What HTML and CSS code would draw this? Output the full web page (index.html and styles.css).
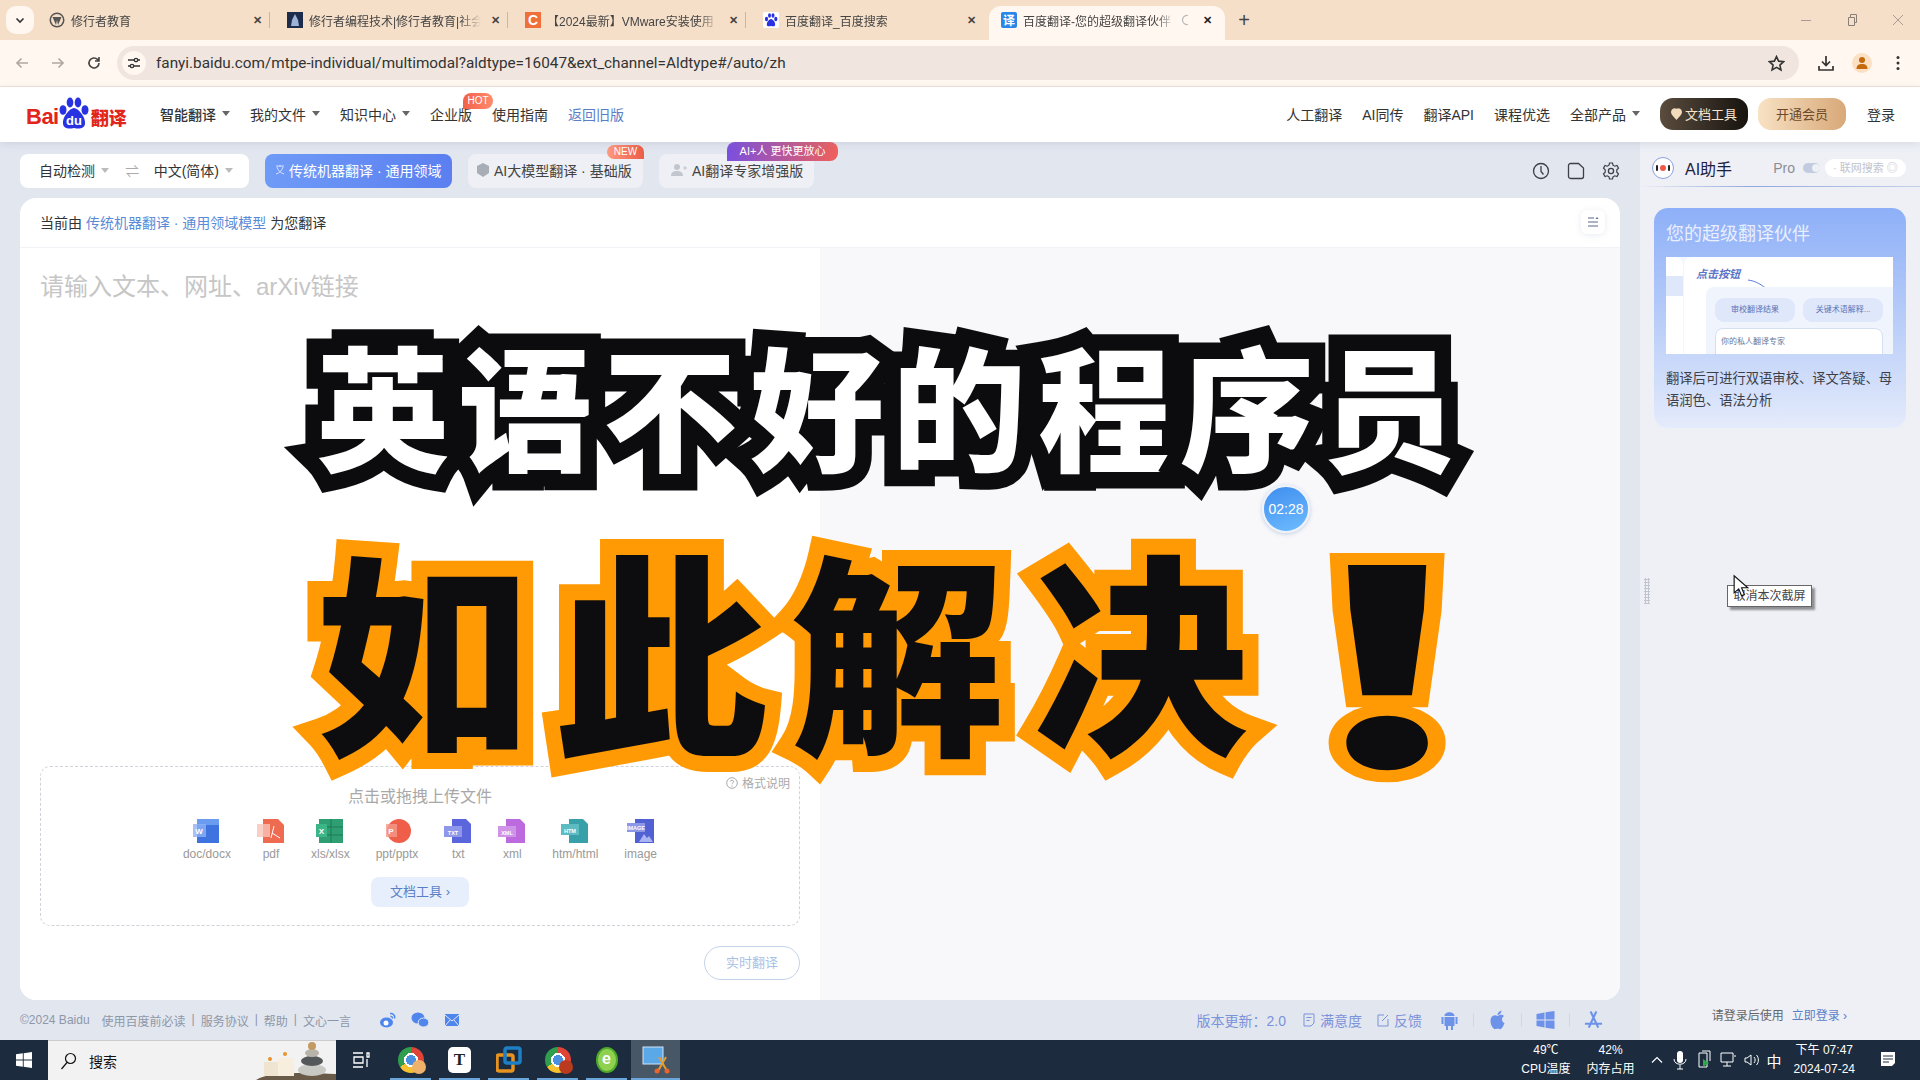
FILE: index.html
```html
<!DOCTYPE html>
<html lang="zh-CN">
<head>
<meta charset="utf-8">
<title>百度翻译</title>
<link rel="stylesheet" href="styles.css">
</head>
<body>
<div class="tabstrip">
  <div class="tablist-btn"><svg width="10" height="10" viewBox="0 0 10 10"><path d="M1.5 3.5 5 7l3.500-3.500" fill="none" stroke="#333" stroke-width="1.600"/></svg></div>
  <div class="tab"><svg class="fav" viewBox="0 0 16 16"><circle cx="8" cy="8" r="7.500" fill="#555"/><circle cx="8" cy="8" r="6" fill="#f5dfc8"/><path d="M3.500 5h9L9 13 8 8l-1 5z" fill="#555"/></svg><span class="tab-title">修行者教育</span><span class="tab-x">✕</span></div>
  <div class="tab"><svg class="fav" viewBox="0 0 16 16"><rect width="16" height="16" fill="#1d2c4a"/><path d="M8 2l3 6 1 6H4l1-6z" fill="#9db4d8"/></svg><span class="tab-title">修行者编程技术|修行者教育|社会</span><span class="tab-x">✕</span></div>
  <div class="tab"><svg class="fav" viewBox="0 0 16 16"><rect width="16" height="16" fill="#f0703a"/><text x="8" y="13" text-anchor="middle" class="fav-c">C</text></svg><span class="tab-title">【2024最新】VMware安装使用</span><span class="tab-x">✕</span></div>
  <div class="tab"><svg class="fav" viewBox="0 0 16 16"><rect width="16" height="16" fill="#fff" rx="2"/><g fill="#2932e1"><ellipse cx="3.500" cy="7" rx="1.600" ry="2.200"/><ellipse cx="6.500" cy="3.500" rx="1.500" ry="2.200"/><ellipse cx="10" cy="3.500" rx="1.500" ry="2.200"/><ellipse cx="12.800" cy="7" rx="1.600" ry="2.200"/><path d="M8 7c2 0 5 4 4 6.500C11 15 9 14 8 14s-3 1-4-.5C3 11 6 7 8 7z"/></g></svg><span class="tab-title">百度翻译_百度搜索</span><span class="tab-x">✕</span></div>
  <div class="tab tab-active"><svg class="fav" viewBox="0 0 16 16"><rect width="16" height="16" rx="2" fill="#2a86e8"/><text x="8" y="13" text-anchor="middle" class="fav-y">译</text></svg><span class="tab-title">百度翻译-您的超级翻译伙伴</span><svg class="spin" viewBox="0 0 12 12"><path d="M7 1.500A4.600 4.600 0 1 0 7 10.500" fill="none" stroke="#bbb" stroke-width="1.200"/></svg><span class="tab-x">✕</span></div>
  <div class="newtab">+</div>
  <div class="winbtns">
    <svg viewBox="0 0 12 12"><path d="M1 6.500h10" stroke="#a99" fill="none"/></svg>
    <svg viewBox="0 0 12 12"><path d="M2.500 3.500h6v8h-6zM4.500 3.500v-3h6v8h-2" stroke="#8a8078" fill="none"/></svg>
    <svg viewBox="0 0 12 12"><path d="M1 1l10 10M11 1 1 11" stroke="#a99" fill="none"/></svg>
  </div>
</div>
<div class="toolbar">
  <svg class="tb-ico" viewBox="0 0 16 16"><path d="M14 8H3M7.500 3.500 3 8l4.500 4.500" fill="none" stroke="#b0a8a2" stroke-width="1.700"/></svg>
  <svg class="tb-ico" viewBox="0 0 16 16"><path d="M2 8h11M8.500 3.500 13 8l-4.500 4.500" fill="none" stroke="#b0a8a2" stroke-width="1.700"/></svg>
  <svg class="tb-ico" viewBox="0 0 16 16"><path d="M13 8a5 5 0 1 1-1.500-3.600L13 6M13 2v4H9" fill="none" stroke="#444" stroke-width="1.600"/></svg>
  <div class="omnibox">
    <span class="site-ico"><svg width="14" height="14" viewBox="0 0 14 14"><path d="M1 4h6M11 4h2M1 10h2M7 10h6" stroke="#333" stroke-width="1.500"/><circle cx="9" cy="4" r="1.700" fill="none" stroke="#333" stroke-width="1.300"/><circle cx="5" cy="10" r="1.700" fill="none" stroke="#333" stroke-width="1.300"/></svg></span>
    <span class="url">fanyi.baidu.com/mtpe-individual/multimodal?aldtype=16047&amp;ext_channel=Aldtype#/auto/zh</span>
    <svg class="star" viewBox="0 0 16 16"><path d="M8 1.500l2 4.300 4.700.5-3.500 3.200 1 4.600L8 11.700l-4.200 2.400 1-4.600L1.300 6.300 6 5.800z" fill="none" stroke="#333" stroke-width="1.500"/></svg>
  </div>
  <div class="tb-right">
    <svg class="tb-ico2" viewBox="0 0 18 18"><path d="M9 2v9M5 7.500 9 11.500l4-4M2 12v4h14v-4" fill="none" stroke="#333" stroke-width="1.700"/></svg>
    <span class="avatar"><svg width="14" height="14" viewBox="0 0 14 14"><circle cx="7" cy="4" r="3" fill="#c46a0c"/><path d="M1.500 13c0-4 2.500-5 5.500-5s5.500 1 5.500 5z" fill="#c46a0c"/></svg></span>
    <svg class="tb-ico2" viewBox="0 0 18 18"><g fill="#333"><circle cx="9" cy="3.500" r="1.500"/><circle cx="9" cy="9" r="1.500"/><circle cx="9" cy="14.500" r="1.500"/></g></svg>
  </div>
</div>

<header class="nav">
  <div class="logo">
    <span class="logo-bai">Bai</span>
    <span class="logo-paw"><svg width="33" height="33" viewBox="0 0 33 33"><g fill="#2932e1"><ellipse cx="6" cy="13" rx="3.500" ry="4.800"/><ellipse cx="13" cy="5.500" rx="3.300" ry="5"/><ellipse cx="21" cy="5.500" rx="3.300" ry="5"/><ellipse cx="28" cy="13" rx="3.500" ry="4.800"/><path d="M17 11c4 0 12 9 11 16-1 5-6 5-11 4-5 1-10 1-11-4-1-7 7-16 11-16z"/></g><text x="17" y="28" text-anchor="middle" class="logo-du">du</text></svg></span>
    <span class="logo-fy">翻译</span>
  </div>
  <nav class="nav-left">
    <span class="nav-item strong">智能翻译<i class="caret"></i></span>
    <span class="nav-item">我的文件<i class="caret"></i></span>
    <span class="nav-item">知识中心<i class="caret"></i></span>
    <span class="nav-item has-badge">企业版<b class="badge badge-hot">HOT</b></span>
    <span class="nav-item">使用指南</span>
    <span class="nav-item link">返回旧版</span>
  </nav>
  <nav class="nav-right">
    <span class="nav-item">人工翻译</span>
    <span class="nav-item">AI同传</span>
    <span class="nav-item">翻译API</span>
    <span class="nav-item">课程优选</span>
    <span class="nav-item">全部产品<i class="caret"></i></span>
    <span class="btn-dark"><svg width="11" height="12" viewBox="0 0 13 14"><path d="M6.500 14C4 11 0 7.500 0 4.500A4.500 4.500 0 0 1 6.500.800 4.500 4.500 0 0 1 13 4.500C13 7.500 9 11 6.500 14z" fill="#f3dcbc"/></svg>文档工具</span>
    <span class="btn-gold">开通会员</span>
    <span class="nav-item login">登录</span>
  </nav>
</header>

<div class="main">
  <section class="workspace">
    <div class="modes">
      <div class="chip chip-lang"><span>自动检测<i class="caret light"></i></span><span class="swap">⇌</span><span>中文(简体)<i class="caret light"></i></span></div>
      <div class="chip chip-on"><svg width="12" height="12" viewBox="0 0 12 12"><path d="M2 2h8M6 1v2M3 3c1 4 4 6 7 7M9 3c-1 3-3 6-7 7" stroke="#d5e2ff" fill="none"/></svg>传统机器翻译 · 通用领域</div>
      <div class="chip chip-off chip-llm"><svg width="12" height="14" viewBox="0 0 12 14"><path d="M6 0l6 3v7l-6 4-6-4V3z" fill="#a9adb6"/></svg>AI大模型翻译 · 基础版<b class="badge badge-new">NEW</b></div>
      <div class="chip chip-off chip-exp"><svg width="16" height="14" viewBox="0 0 16 14"><circle cx="6" cy="4" r="3" fill="#c2c6ce"/><path d="M0 13c0-4 3-5 6-5s6 1 6 5z" fill="#c2c6ce"/><path d="M12 5h4M14 3v4" stroke="#c2c6ce"/></svg>AI翻译专家增强版<b class="badge badge-ai">AI+人 更快更放心</b></div>
      <div class="mode-tools">
        <svg viewBox="0 0 18 18"><circle cx="9" cy="9" r="7.500" fill="none" stroke="#3c3f47" stroke-width="1.300"/><path d="M9 4v5.500l2.500 3" fill="none" stroke="#3c3f47" stroke-width="1.300"/></svg>
        <svg viewBox="0 0 18 18"><path d="M1.500 3.500a2 2 0 0 1 2-2h8l5 4.500v8.500a2 2 0 0 1-2 2h-11a2 2 0 0 1-2-2z" fill="none" stroke="#3c3f47" stroke-width="1.300"/></svg>
        <svg viewBox="0 0 18 18"><circle cx="9" cy="9" r="2.600" fill="none" stroke="#3c3f47" stroke-width="1.300"/><path d="M7.500 1h3l.5 2.200 1.800 1 2.200-.7 1.500 2.600-1.700 1.600v2.600l1.700 1.600-1.500 2.600-2.200-.7-1.800 1-.5 2.200h-3L7 14.800l-1.800-1-2.200.7-1.500-2.600 1.700-1.600V7.700L1.500 6.100 3 3.500l2.200.7 1.800-1z" fill="none" stroke="#3c3f47" stroke-width="1.200"/></svg>
      </div>
    </div>
    <div class="card">
      <div class="card-head">
        <p class="current">当前由 <a>传统机器翻译 · 通用领域模型</a> 为您翻译</p>
        <span class="fold"><svg width="12" height="12" viewBox="0 0 12 12"><path d="M1 2h6M1 6h10M1 10h10" stroke="#5b6b8a" stroke-width="1.200"/><path d="M8.500 3 10 1l1.500 2z" fill="#5b6b8a"/></svg></span>
      </div>
      <div class="panes">
        <div class="pane-src">
          <p class="placeholder">请输入文本、网址、arXiv链接</p>
          <div class="upload">
            <span class="format"><svg width="12" height="12" viewBox="0 0 12 12"><circle cx="6" cy="6" r="5.300" fill="none" stroke="#aaa"/><path d="M4.300 4.600C4.300 2.800 7.700 2.800 7.700 4.600 7.700 6 6 5.800 6 7.300M6 8.500v1.200" fill="none" stroke="#aaa"/></svg>格式说明</span>
            <p class="upload-title">点击或拖拽上传文件</p>
            <div class="files">
              <div class="file"><svg viewBox="0 0 28 24"><path d="M4 0h22v24H4z" fill="#3f73e0"/><path d="M4 0h22v6H4z" fill="#6a9cf0"/><rect y="5" width="13" height="13" fill="#8fb1f3" opacity=".8"/><text x="6" y="15" text-anchor="middle" class="ft">W</text></svg><span>doc/docx</span></div>
              <div class="file"><svg viewBox="0 0 28 24"><path d="M6 0h15l6 6v18H6z" fill="#ee6a50"/><rect y="5" width="13" height="13" fill="#f9c3b6" opacity=".8"/><path d="M17 7l-3 12M15 14l8 5" stroke="#fff" fill="none"/></svg><span>pdf</span></div>
              <div class="file"><svg viewBox="0 0 28 24"><path d="M3 0h24v24H3z" fill="#2f9e72"/><path d="M15 0v24M3 8h24M3 16h24" stroke="#1f7a55"/><rect y="5" width="11" height="13" fill="#3cb587"/><text x="5.500" y="15" text-anchor="middle" class="ft">X</text></svg><span>xls/xlsx</span></div>
              <div class="file"><svg viewBox="0 0 28 24"><ellipse cx="16" cy="12" rx="12" ry="12" fill="#ee5e48"/><rect x="3" y="5" width="11" height="13" fill="#f59a8a" opacity=".8"/><text x="8" y="15" text-anchor="middle" class="ft">P</text></svg><span>ppt/pptx</span></div>
              <div class="file"><svg viewBox="0 0 28 24"><path d="M8 0h14l5 5v19H8z" fill="#5c66dc"/><rect y="7" width="18" height="11" fill="#8f97ea"/><text x="9" y="15.500" text-anchor="middle" class="fts">TXT</text></svg><span>txt</span></div>
              <div class="file"><svg viewBox="0 0 28 24"><path d="M8 0h14l5 5v19H8z" fill="#bd6ade"/><rect y="7" width="18" height="11" fill="#cf94e8"/><text x="9" y="15.500" text-anchor="middle" class="fts">XML</text></svg><span>xml</span></div>
              <div class="file"><svg viewBox="0 0 28 24"><path d="M8 0h14l5 5v19H8z" fill="#37a0a8"/><rect y="5" width="18" height="11" fill="#5dbcc2"/><text x="9" y="13.500" text-anchor="middle" class="fts">HTM</text></svg><span>htm/html</span></div>
              <div class="file"><svg viewBox="0 0 28 24"><path d="M8 0h19v24H8z" fill="#5161d4"/><rect y="4" width="18" height="9" fill="#8c97e6"/><text x="9" y="10.500" text-anchor="middle" class="fts">IMAGE</text><path d="M12 23l5-8 3 4 2-2 4 6z" fill="#a9b4f0"/></svg><span>image</span></div>
            </div>
            <span class="doc-tools">文档工具 ›</span>
          </div>
          <div class="rt-row"><span class="rt-btn">实时翻译</span></div>
        </div>
        <div class="pane-dst"></div>
      </div>
    </div>
    <footer class="foot">
      <div class="foot-left">
        <span>©2024 Baidu</span>
        <span class="foot-links"><span>使用百度前必读</span><span>|</span><span>服务协议</span><span>|</span><span>帮助</span><span>|</span><span>文心一言</span></span>
        <span class="foot-social">
          <svg viewBox="0 0 18 18"><ellipse cx="7.500" cy="11.500" rx="6.500" ry="5" fill="#4f86ee"/><circle cx="7" cy="12" r="2.500" fill="#fff"/><path d="M11 2.500c3-.5 5.500 2 4.500 5M11.500 5.500c1.500-.3 2.300.8 2 2" fill="none" stroke="#4f86ee" stroke-width="1.400"/></svg>
          <svg viewBox="0 0 18 18"><ellipse cx="7" cy="7" rx="6.500" ry="5.500" fill="#4f86ee"/><ellipse cx="12.500" cy="11.500" rx="5.300" ry="4.500" fill="#4f86ee" stroke="#e2e6ef"/></svg>
          <svg viewBox="0 0 18 18"><rect x="2" y="3" width="14" height="12" fill="#4f86ee"/><path d="M2 4l7 6 7-6M2 15l5-6M16 15l-5-6" fill="none" stroke="#e2e6ef"/></svg>
        </span>
      </div>
      <div class="foot-right">
        <span class="ver">版本更新：2.0</span>
        <span class="foot-act"><svg viewBox="0 0 12 14"><path d="M1 1h10v9l-3 3H1zM3.500 4.500h5M3.500 7.500h3" fill="none" stroke="#7b93da"/></svg>满意度</span>
        <span class="foot-act"><svg viewBox="0 0 12 14"><path d="M11 6v7H1V2h6M5 8l6-6" fill="none" stroke="#7b93da"/></svg>反馈</span>
        <span class="platforms">
          <svg viewBox="0 0 18 20"><path d="M4 7h10v9H4zM1 7h2v7H1zM15 7h2v7h-2zM5.500 16h2v4h-2zM10.500 16h2v4h-2zM4 6c0-5 10-5 10 0z" fill="#6d92ea"/></svg>
          <i class="sep"></i>
          <svg viewBox="0 0 18 20"><path d="M9 6C6 4 2 6 2 11c0 4 3 9 5 8 1-.5 2.500-.5 4 0 2 1 4-3 5-6-3-1-3.500-5-.5-7-2-2-4-1-6.500 0zM9 5c0-2 1.500-4 4-4.500C13 3 11 5 9 5z" fill="#6d92ea"/></svg>
          <i class="sep"></i>
          <svg viewBox="0 0 18 20"><path d="M0 4l8-1.500V9.500H0zM9 2.300 18 1v8.500H9zM0 10.500h8v7L0 16zM9 10.500h9V19l-9-1.300z" fill="#6d92ea"/></svg>
          <i class="sep"></i>
          <svg viewBox="0 0 20 20"><path d="M7 1l8 17M13 1 5 18M1 14h18" fill="none" stroke="#6d92ea" stroke-width="2.200"/></svg>
        </span>
      </div>
    </footer>
  </section>

  <aside class="assist">
    <div class="assist-head">
      <span class="bot"><i></i><i class="red"></i><i></i></span>
      <span class="assist-name">AI助手</span>
      <span class="pro">Pro</span>
      <span class="toggle"></span>
      <span class="web">· 联网搜索 ◎</span>
    </div>
    <div class="promo">
      <h3 class="promo-title">您的超级翻译伙伴</h3>
      <div class="mock">
        <div class="mock-side"></div>
        <div class="mock-main">
          <em class="mock-click">点击按钮</em>
          <svg class="mock-arrow" width="26" height="16" viewBox="0 0 26 16"><path d="M0 1c8 1 14 5 20 10" fill="none" stroke="#5a7ad8"/><path d="M24 15l-8-2 5-5z" fill="#5a7ad8"/></svg>
          <div class="mock-panel">
            <div class="mock-btns"><span>审校翻译结果</span><span>关键术语解释...</span></div>
            <div class="mock-input">你的私人翻译专家</div>
          </div>
        </div>
      </div>
      <p class="promo-desc">翻译后可进行双语审校、译文答疑、母语润色、语法分析</p>
    </div>
    <div class="assist-foot">请登录后使用<a>立即登录 ›</a></div>
  </aside>
</div>

<div class="taskbar">
  <div class="start"><svg width="16" height="16" viewBox="0 0 16 16"><path d="M0 2.300 6.800 1.300v6.200H0zM7.700 1.200 16 0v7.500H7.700zM0 8.500h6.800v6.200L0 13.700zM7.700 8.500H16V16l-8.300-1.200z" fill="#fff"/></svg></div>
  <div class="search">
    <svg width="18" height="18" viewBox="0 0 18 18"><circle cx="10.500" cy="6.500" r="5" fill="none" stroke="#111" stroke-width="1.200"/><path d="M7 10.500 1.500 17" stroke="#111" stroke-width="1.200"/></svg>
    <span>搜索</span>
    <svg class="stones" width="80" height="40" viewBox="0 0 80 40"><path d="M0 40c10-8 50-8 80-6v6z" fill="#6a5a48"/><rect x="8" y="22" width="14" height="14" fill="#efe4cf"/><rect x="22" y="18" width="16" height="18" fill="#f7eedd"/><circle cx="14" cy="19" r="2" fill="#e8942a"/><circle cx="29" cy="14" r="2" fill="#e8942a"/><ellipse cx="56" cy="30" rx="14" ry="6" fill="#c9c9c4"/><ellipse cx="56" cy="21" rx="11" ry="5" fill="#55585a"/><ellipse cx="56" cy="13" rx="7" ry="4" fill="#b8b4aa"/><circle cx="56" cy="6" r="4" fill="#c29a62"/></svg>
  </div>
  <div class="taskview"><svg width="18" height="18" viewBox="0 0 18 18"><path d="M1 2h10M1 16h10M2 6h9v6H2zM15 2h2v4h-2zM15 8v8" fill="none" stroke="#fff" stroke-width="1.300"/></svg></div>
  <div class="apps">
    <span class="app"><i class="chrome"></i><i class="app-badge gold"></i></span>
    <span class="app"><b class="app-t">T</b></span>
    <span class="app"><svg width="26" height="28" viewBox="0 0 26 28"><rect x="1" y="9" width="16" height="16" rx="2" fill="none" stroke="#e8921f" stroke-width="3.500"/><rect x="9" y="2" width="15" height="15" rx="2" fill="none" stroke="#1f7fc4" stroke-width="3.500"/></svg></span>
    <span class="app"><i class="chrome"></i><i class="app-badge red"></i></span>
    <span class="app"><i class="app-e">e</i></span>
    <span class="app app-on"><svg width="28" height="30" viewBox="0 0 28 30"><rect x="1" y="2" width="20" height="17" fill="#5aa8e8" stroke="#cfe4f6"/><path d="M16 26l8-14M25 26l-8-14" stroke="#e89a2a" stroke-width="2"/><circle cx="15" cy="26" r="2.500" fill="#e8642a"/><circle cx="25" cy="26" r="2.500" fill="#e8642a"/></svg></span>
  </div>
  <div class="tray">
    <div class="stat"><span>49℃</span><span>CPU温度</span></div>
    <div class="stat"><span>42%</span><span>内存占用</span></div>
    <svg class="tray-up" viewBox="0 0 14 14"><path d="M2 9.500 7 4.500l5 5" fill="none" stroke="#fff" stroke-width="1.200"/></svg>
    <svg class="tray-ico" viewBox="0 0 16 20"><rect x="5" y="1" width="6" height="12" rx="3" fill="#fff"/><path d="M2 9c0 7 12 7 12 0M8 15v4M5 19h6" fill="none" stroke="#fff"/></svg>
    <svg class="tray-ico" viewBox="0 0 16 20"><path d="M3 3h8v14H3zM6 1h8v10" fill="none" stroke="#fff"/><path d="M7 9l6 4-6 4z" fill="#2fa84a"/></svg>
    <svg class="tray-ico" viewBox="0 0 16 20"><path d="M1 3h12v9H1zM7 12v4M3 16h8M14 6h2" fill="none" stroke="#fff"/></svg>
    <svg class="tray-ico" viewBox="0 0 16 20"><path d="M1 8v4h2l4 3V5L3 8zM10 7c1.500 1.500 1.500 4.500 0 6M12.500 5c2.500 2.500 2.500 7.500 0 10" fill="none" stroke="#fff"/></svg>
    <span class="ime">中</span>
    <div class="clock"><span>下午 07:47</span><span>2024-07-24</span></div>
    <svg class="notice" viewBox="0 0 16 18"><path d="M1 1h14v11l-3 3H1z" fill="#fff"/><path d="M3 5h10M3 8h10M3 11h6" stroke="#1c2c3e"/></svg>
  </div>
</div>

<svg class="headline" viewBox="0 0 1920 1080" width="1920" height="1080">
  <text class="hl-top" x="316 458 603 750 892 1038 1180 1322" y="461">英语不好的程序员</text>
  <text class="hl-bottom" x="316 554 791 1034" y="738">如此解决</text>
  <text class="hl-bottom hl-bang" transform="translate(1487 767) scale(1.48 1)" text-anchor="middle">！</text>
</svg>
<div class="timer">02:28</div>
<div class="grip"></div>
<div class="tip">取消本次截屏</div>
<svg class="cursor" width="16" height="24" viewBox="0 0 14 20"><path d="M1 1v15l4-3.500 2.500 6 2.500-1-2.500-6H13z" fill="#fff" stroke="#111"/></svg>
</body>
</html>
```
FILE: styles.css
```css
* { box-sizing: border-box; }
html, body { margin: 0; padding: 0; }
body {
  position: relative;
  width: 1920px;
  height: 1080px;
  overflow: hidden;
  display: flex;
  flex-direction: column;
  font-family: "Liberation Sans", "Noto Sans CJK SC", sans-serif;
  font-size: 14px;
  color: #333;
  background: #e2e6ef;
}
p, h3 { margin: 0; font-weight: 400; }
i, em { font-style: normal; }

/* browser chrome */
.tabstrip { height: 40px; flex: none; display: flex; align-items: flex-end; background: #f5dfc8; position: relative; }
.tablist-btn { position: absolute; left: 6px; top: 6px; width: 28px; height: 28px; border-radius: 10px; background: #fff7f0; display: flex; align-items: center; justify-content: center; }
.tablist-btn svg { display: block; }
.tab { width: 238px; height: 34px; display: flex; align-items: center; padding: 0 10px 6px 12px; gap: 6px; font-size: 12px; color: #444; position: relative; }
.tablist-btn + .tab { margin-left: 37px; }
.tab:not(.tab-active):not(:nth-child(5))::after { content: ""; position: absolute; right: 5px; top: 6px; height: 16px; width: 1px; background: #c9b7a5; }
.tab-active { background: #fff7f0; border-radius: 12px 12px 0 0; width: 236px; }
.fav { width: 16px; height: 16px; flex: none; }
.fav-c { font: 700 14px "Liberation Sans", sans-serif; fill: #fff; }
.fav-y { font: 700 12px "Noto Sans CJK SC", sans-serif; fill: #fff; }
.tab-title { flex: 1; white-space: nowrap; overflow: hidden; min-width: 0; -webkit-mask-image: linear-gradient(90deg, #000 88%, transparent); mask-image: linear-gradient(90deg, #000 88%, transparent); }
.tab-x { font-size: 11px; font-weight: 700; width: 16px; text-align: center; color: #444; }
.tab-active .tab-x { color: #222; }
.spin { width: 12px; height: 12px; flex: none; }
.newtab { width: 38px; height: 34px; font-size: 20px; line-height: 28px; text-align: center; color: #444; }
.winbtns { margin-left: auto; align-self: center; display: flex; gap: 34px; padding-right: 16px; }
.winbtns svg { width: 12px; height: 12px; display: block; }

.toolbar { height: 47px; flex: none; display: flex; align-items: center; background: #fff7f0; padding-left: 14px; border-bottom: 1px solid #f3e0d3; }
.tb-ico { width: 16px; height: 16px; margin-right: 20px; flex: none; }
.tb-ico:nth-child(3) { margin-right: 15px; }
.omnibox { width: 1682px; height: 34px; background: #f0e6df; border-radius: 17px; display: flex; align-items: center; padding: 0 14px 0 5px; }
.site-ico { width: 24px; height: 24px; background: #fff7f0; border-radius: 50%; display: flex; align-items: center; justify-content: center; }
.url { font: 15.300px Roboto, "Liberation Sans", sans-serif; color: #333; margin-left: 10px; white-space: nowrap; }
.star { width: 17px; height: 17px; margin-left: auto; }
.tb-right { flex: 1; display: flex; align-items: center; padding-left: 18px; gap: 17px; }
.tb-ico2 { width: 18px; height: 18px; }
.avatar { width: 20px; height: 20px; background: #fbe0c3; border-radius: 50%; display: flex; align-items: center; justify-content: center; }

/* site nav */
.nav { height: 55px; flex: none; display: flex; align-items: center; background: #fff; padding: 0 25px 2px 26px; position: relative; z-index: 1; box-shadow: 0 2px 8px rgba(120, 130, 160, .18); }
.logo { width: 101px; height: 32px; display: flex; align-items: center; flex: none; margin-right: 33px; }
.logo-bai { font: 700 22px "Liberation Sans", sans-serif; color: #e1251b; margin-top: 6px; letter-spacing: -.5px; }
.logo-paw { width: 33px; height: 33px; flex: none; margin-left: -2px; }
.logo-paw svg { display: block; }
.logo-du { font: 700 13px "Liberation Sans", sans-serif; fill: #fff; }
.logo-fy { font: 900 18px "Noto Sans CJK SC", sans-serif; color: #e1251b; margin-top: 6px; white-space: nowrap; margin-left: 1px; }
.nav-left, .nav-right { display: flex; align-items: center; gap: 20px; }
.nav-right { margin-left: auto; }
.nav-item { white-space: nowrap; color: #333; position: relative; display: inline-flex; align-items: center; }
.nav-item.strong { font-weight: 500; }
.nav-item.link { color: #5b7fc7; }
.caret { display: inline-block; width: 0; height: 0; border: 4px solid transparent; border-top: 5px solid #666; border-bottom: 0; margin-left: 6px; }
.caret.light { border-top-color: #bbb; }
.badge { position: absolute; color: #fff; font-weight: 400; white-space: nowrap; text-align: center; }
.badge-hot { left: 33px; top: -11px; width: 30px; height: 16px; font-size: 10px; line-height: 16px; border-radius: 8px 8px 8px 0; background: linear-gradient(90deg, #f2604a, #ff8a6c); }
.btn-dark { width: 88px; height: 32px; border-radius: 13px; background: linear-gradient(90deg, #5a4c3e, #17130f); color: #f6e6cf; font-size: 13px; display: flex; align-items: center; justify-content: center; gap: 3px; }
.btn-gold { width: 88px; height: 32px; margin-left: -10px; border-radius: 13px; background: linear-gradient(90deg, #f8e2c4, #d8a878); color: #6a4a2a; font-size: 13px; display: flex; align-items: center; justify-content: center; }
.login { margin-left: 1px; }

/* layout */
.main { flex: 1; display: flex; min-height: 0; }
.workspace { width: 1640px; flex: none; display: flex; flex-direction: column; padding: 12px 20px 0; background: #e2e6ef; }
.modes { height: 34px; display: flex; gap: 16px; flex: none; }
.chip { height: 34px; border-radius: 8px; display: flex; align-items: center; position: relative; white-space: nowrap; font-size: 14px; padding-bottom: 2px; }
.chip-lang { width: 229px; background: #fff; padding: 0 16px 2px 19px; justify-content: space-between; }
.chip-lang span { display: inline-flex; align-items: center; }
.chip-lang .swap { color: #aaa; font-size: 14px; margin-left: 2px; }
.chip-on { width: 187px; background: linear-gradient(90deg, #6f9bf7, #5b7ff0); color: #fff; padding-left: 9px; gap: 3px; }
.chip-off { background: #eef0f5; color: #444; padding-left: 9px; gap: 5px; }
.chip-llm { width: 175px; }
.chip-exp { width: 155px; padding-left: 12px; }
.badge-new { right: -1px; top: -9px; width: 37px; height: 14px; font-size: 10px; line-height: 14px; border-radius: 7px 7px 0 7px; background: linear-gradient(90deg, #ff9a80, #ec5c48); }
.badge-ai { left: 68px; top: -12px; width: 111px; height: 19px; font-size: 11px; line-height: 19px; border-radius: 8px 8px 8px 0; background: linear-gradient(90deg, #7a4fe0, #f0605a); }
.mode-tools { margin-left: auto; display: flex; align-items: center; gap: 17px; }
.mode-tools svg { width: 18px; height: 18px; display: block; }

.card { height: 802px; flex: none; margin-top: 10px; border-radius: 16px; overflow: hidden; background: #fff; display: flex; flex-direction: column; }
.card-head { height: 50px; flex: none; display: flex; align-items: center; justify-content: space-between; padding: 0 15px 1px 20px; border-bottom: 1px solid #f1f2f5; }
.current { font-size: 14px; color: #333; }
.current a { color: #5b8bd6; }
.fold { width: 24px; height: 24px; border-radius: 6px; display: flex; align-items: center; justify-content: center; background: #fff; box-shadow: 0 1px 6px rgba(100, 120, 160, .15); }
.panes { flex: 1; display: flex; min-height: 0; }
.pane-src { width: 800px; flex: none; display: flex; flex-direction: column; padding: 21px 20px 20px; background: #fff; }
.pane-dst { flex: 1; background: #f8f8fb; }
.placeholder { font-size: 24px; line-height: 36px; color: #c6c6c6; }
.upload { margin-top: auto; height: 160px; border: 1px dashed #cfd2d8; border-radius: 10px; display: flex; flex-direction: column; align-items: center; position: relative; padding-top: 18px; }
.format { position: absolute; right: 9px; top: 7px; font-size: 12px; color: #aaa; display: flex; align-items: center; gap: 4px; }
.upload-title { font-size: 16px; line-height: 24px; color: #a8a8a8; }
.files { display: flex; gap: 26px; margin-top: 10px; }
.file { display: flex; flex-direction: column; align-items: center; gap: 4px; font: 12px "Liberation Sans", sans-serif; color: #999; }
.file svg { width: 28px; height: 24px; display: block; }
.ft { font: 700 8px "Liberation Sans", sans-serif; fill: #fff; }
.fts { font: 700 5.500px "Liberation Sans", sans-serif; fill: #fff; }
.doc-tools { margin-top: 16px; width: 98px; height: 30px; border-radius: 8px; background: #e8effc; color: #5b7fc7; font-size: 13px; line-height: 30px; text-align: center; }
.rt-row { display: flex; justify-content: flex-end; margin-top: 20px; }
.rt-btn { width: 96px; height: 34px; border: 1px solid #c5d3ea; border-radius: 17px; text-align: center; line-height: 32px; font-size: 13px; color: #a9bfe6; background: #fff; }

.foot { flex: 1; display: flex; align-items: center; justify-content: space-between; font-size: 12px; color: #8e97a8; padding-right: 17px; }
.foot-left { display: flex; align-items: center; }
.foot-links { margin-left: 12px; display: flex; gap: 6px; }
.foot-social { display: flex; gap: 14px; margin-left: 28px; }
.foot-social svg { width: 18px; height: 18px; display: block; }
.foot-right { display: flex; align-items: center; color: #7b93da; font-size: 14px; }
.ver { margin-right: 17px; }
.foot-act { display: flex; align-items: center; gap: 5px; margin-right: 15px; }
.foot-act svg { width: 12px; height: 14px; }
.platforms { display: flex; align-items: center; gap: 14px; margin-left: 3px; }
.platforms svg { width: 19px; height: 20px; display: block; }
.sep { width: 1px; height: 14px; background: #d4d8e2; }

/* assistant */
.assist { flex: 1; background: #eef0f6; display: flex; flex-direction: column; position: relative; }
.assist-head { height: 45px; flex: none; display: flex; align-items: center; padding: 7px 0 0 12px; border-bottom: 1px solid; border-image: linear-gradient(90deg, transparent, #8fa9dc 40%, #c5d0ea 100%) 1; }
.bot { width: 22px; height: 22px; border-radius: 50%; background: #fff; border: 1px solid #8e9fe0; display: flex; align-items: center; justify-content: center; gap: 2px; }
.bot i { width: 2px; height: 6px; background: #222; border-radius: 1px; }
.bot .red { width: 6px; height: 6px; border-radius: 50%; background: #ee5a48; }
.assist-name { font-size: 16px; margin-left: 11px; color: #1d2140; }
.pro { margin-left: 41px; color: #8c8c94; }
.toggle { margin-left: 8px; width: 17px; height: 10px; border-radius: 5px; background: #c3cbdf; position: relative; }
.toggle::after { content: ""; position: absolute; right: 0; top: 1px; width: 8px; height: 8px; border-radius: 50%; background: #eef0f6; }
.web { margin-left: 5px; width: 81px; height: 18px; border-radius: 9px; background: #fff; color: #bfc4ce; font-size: 11px; line-height: 18px; text-align: center; white-space: nowrap; }
.promo { margin: 21px 14px 0; height: 220px; border-radius: 14px; background: linear-gradient(180deg, #8eb0f8, #b3c9f8 45%, #e4ebfb); padding: 11px 13px 0 12px; flex: none; overflow: hidden; }
.promo-title { font-size: 18px; line-height: 30px; color: rgba(255, 255, 255, .8); }
.mock { height: 97px; margin-top: 8px; display: flex; background: #f3f6fe; overflow: hidden; }
.mock-side { width: 17px; flex: none; margin-right: 1px; background: linear-gradient(180deg, #fff 20%, #dfe8fb 20%, #dfe8fb 40%, #fff 40%); border-radius: 0 8px 0 0; }
.mock-main { flex: 1; background: #fff; border-radius: 8px 0 0 0; padding: 10px 0 0 12px; position: relative; }
.mock-click { font-size: 11px; font-weight: 700; font-style: italic; color: #5c74c8; display: block; line-height: 14px; }
.mock-arrow { position: absolute; left: 64px; top: 22px; }
.mock-panel { position: absolute; left: 22px; top: 30px; right: 0; bottom: 0; background: #f0f4fd; padding: 11px 10px 0 9px; border-radius: 8px 0 0 0; }
.mock-btns { display: flex; gap: 8px; }
.mock-btns span { flex: 1; height: 24px; line-height: 24px; border-radius: 9px; background: #dfe7fa; text-align: center; font-size: 8px; color: #5c74b8; white-space: nowrap; }
.mock-input { margin-top: 6px; height: 40px; background: #fff; border: 1px solid #d5def3; border-radius: 8px; font-size: 8px; color: #6c7698; padding: 6px 5px; }
.promo-desc { margin-top: 14px; font-size: 13.300px; line-height: 22px; color: #3c3f4a; }
.assist-foot { margin-top: auto; height: 46px; display: flex; justify-content: flex-end; align-items: flex-start; padding: 12px 73px 0 0; font-size: 12px; color: #666; gap: 8px; }
.assist-foot a { color: #5b7fc7; }

/* taskbar */
.taskbar { height: 40px; flex: none; display: flex; align-items: stretch; background: #1c2c3e; color: #fff; }
.start { width: 48px; display: flex; align-items: center; justify-content: center; }
.search { width: 288px; background: #f2f2f2; border-top: 1px solid #ccc; display: flex; align-items: center; gap: 11px; padding-left: 12px; color: #111; font-size: 14px; position: relative; }
.stones { position: absolute; right: 0; bottom: 0; display: block; }
.taskview { width: 50px; display: flex; align-items: center; justify-content: center; }
.apps { display: flex; }
.app { width: 49px; display: flex; align-items: center; justify-content: center; position: relative; }
.app::after { content: ""; position: absolute; left: 4px; right: 4px; bottom: 0; height: 2px; background: #6aa5dc; }
.app-on { background: #475766; }
.app-on::after { left: 0; right: 0; }
.chrome { width: 26px; height: 26px; border-radius: 50%; background: radial-gradient(circle, #4a90e2 0 5px, #fff 5px 7px, transparent 7px), conic-gradient(#e04438 0 33%, #f5c12e 33% 66%, #2f9e4f 66%); }
.app-badge { position: absolute; right: 9px; bottom: 6px; width: 14px; height: 14px; border-radius: 50%; }
.app-badge.gold { background: #efb26a; }
.app-badge.red { background: #b93a1e; }
.app-t { width: 23px; height: 26px; border-radius: 5px; background: #fff; color: #222; font: 700 17px "Liberation Serif", serif; display: flex; align-items: center; justify-content: center; }
.app-e { width: 22px; height: 26px; border-radius: 50%; background: #8fd14f; color: #fff; border: 2px solid #4ea82c; font: 700 16px/20px "Liberation Sans", sans-serif; text-align: center; }
.tray { margin-left: auto; display: flex; align-items: center; padding-right: 24px; }
.stat, .clock { display: flex; flex-direction: column; align-items: center; font-size: 12px; line-height: 19px; white-space: nowrap; }
.stat:first-child { margin-right: 16px; }
.tray-up { width: 14px; height: 14px; margin-left: 15px; }
.tray-ico { width: 16px; height: 20px; margin-left: 8px; }
.ime { font-size: 15px; margin-left: 7px; }
.clock { margin-left: 12px; }
.notice { width: 16px; height: 18px; margin-left: 25px; }

/* overlays */
.headline { position: absolute; left: 0; top: 0; pointer-events: none; }
.headline text { font-family: "Noto Sans CJK SC", sans-serif; font-weight: 900; paint-order: stroke fill; stroke-linejoin: miter; stroke-miterlimit: 2.500; }
.hl-top { font-size: 134px; fill: #fff; stroke: #0c0c0e; stroke-width: 33px; }
.hl-bottom { font-size: 214px; fill: #0d0d0f; stroke: #ff9a05; stroke-width: 32px; }
.headline .hl-bang { font-size: 270px; stroke-width: 24px; }
.timer { position: absolute; left: 1262px; top: 485px; width: 48px; height: 48px; border-radius: 50%; border: 2px solid #eef2fa; background: linear-gradient(160deg, #3f8eee, #6ebcff); color: #fff; font-size: 14px; line-height: 44px; text-align: center; box-shadow: 0 1px 4px rgba(90, 120, 170, .35); }
.grip { position: absolute; left: 1644px; top: 578px; width: 6px; height: 26px; background: radial-gradient(circle, #c0c5d0 1px, transparent 1.200px) 0 0 / 3px 3px; }
.cursor { position: absolute; left: 1733px; top: 574px; z-index: 2; }
.tip { position: absolute; left: 1727px; top: 585px; width: 85px; height: 22px; background: #fff; border: 1px solid #666; box-shadow: 3px 3px 2px rgba(0, 0, 0, .4); font-size: 12px; line-height: 20px; text-align: center; color: #444; }
```
